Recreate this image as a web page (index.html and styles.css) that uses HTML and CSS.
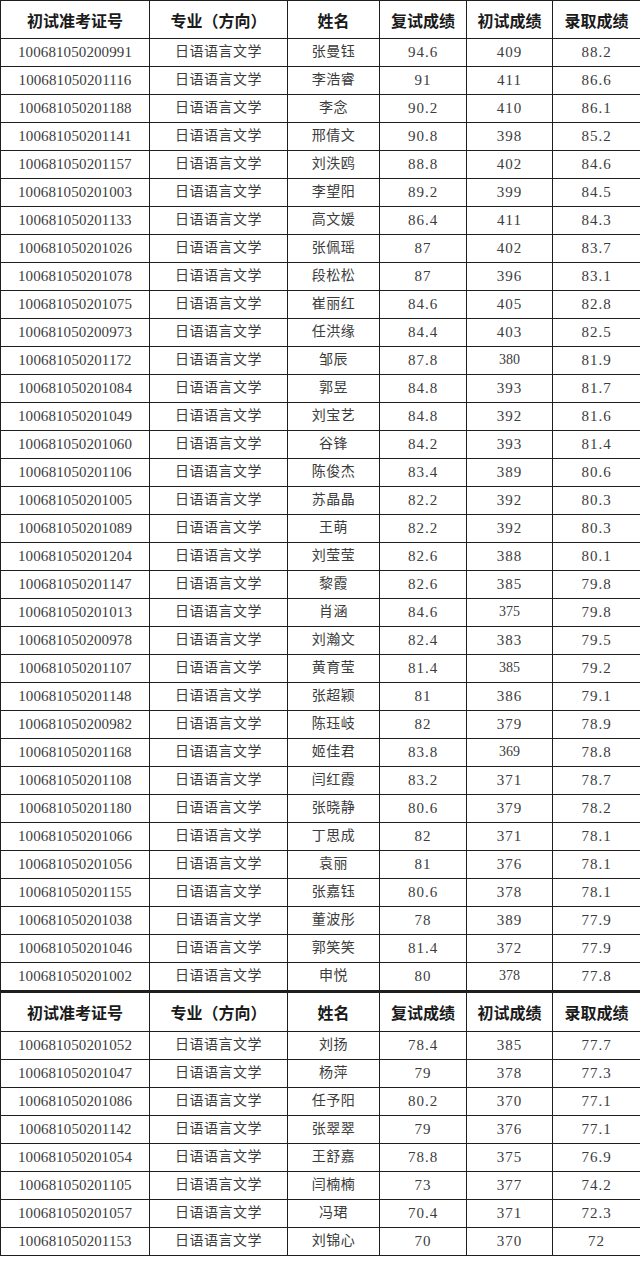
FILE: index.html
```html
<!DOCTYPE html>
<html lang="zh">
<head>
<meta charset="utf-8">
<link rel="stylesheet" href="styles.css">
</head>
<body>
<table class="grid">
<colgroup><col class="c1"><col class="c2"><col class="c3"><col class="c4"><col class="c5"><col class="c6"></colgroup>
<thead>
<tr class="head"><th>初试准考证号</th><th>专业（方向）</th><th>姓名</th><th>复试成绩</th><th>初试成绩</th><th>录取成绩</th></tr>
</thead>
<tbody>
<tr><td class="id">100681050200991</td><td>日语语言文学</td><td>张曼钰</td><td class="n">94.6</td><td class="n">409</td><td class="n">88.2</td></tr>
<tr><td class="id">100681050201116</td><td>日语语言文学</td><td>李浩睿</td><td class="n">91</td><td class="n">411</td><td class="n">86.6</td></tr>
<tr><td class="id">100681050201188</td><td>日语语言文学</td><td>李念</td><td class="n">90.2</td><td class="n">410</td><td class="n">86.1</td></tr>
<tr><td class="id">100681050201141</td><td>日语语言文学</td><td>邢倩文</td><td class="n">90.8</td><td class="n">398</td><td class="n">85.2</td></tr>
<tr><td class="id">100681050201157</td><td>日语语言文学</td><td>刘泆鸥</td><td class="n">88.8</td><td class="n">402</td><td class="n">84.6</td></tr>
<tr><td class="id">100681050201003</td><td>日语语言文学</td><td>李望阳</td><td class="n">89.2</td><td class="n">399</td><td class="n">84.5</td></tr>
<tr><td class="id">100681050201133</td><td>日语语言文学</td><td>高文媛</td><td class="n">86.4</td><td class="n">411</td><td class="n">84.3</td></tr>
<tr><td class="id">100681050201026</td><td>日语语言文学</td><td>张佩瑶</td><td class="n">87</td><td class="n">402</td><td class="n">83.7</td></tr>
<tr><td class="id">100681050201078</td><td>日语语言文学</td><td>段松松</td><td class="n">87</td><td class="n">396</td><td class="n">83.1</td></tr>
<tr><td class="id">100681050201075</td><td>日语语言文学</td><td>崔丽红</td><td class="n">84.6</td><td class="n">405</td><td class="n">82.8</td></tr>
<tr><td class="id">100681050200973</td><td>日语语言文学</td><td>任洪缘</td><td class="n">84.4</td><td class="n">403</td><td class="n">82.5</td></tr>
<tr><td class="id">100681050201172</td><td>日语语言文学</td><td>邹辰</td><td class="n">87.8</td><td class="n sm">380</td><td class="n">81.9</td></tr>
<tr><td class="id">100681050201084</td><td>日语语言文学</td><td>郭昱</td><td class="n">84.8</td><td class="n">393</td><td class="n">81.7</td></tr>
<tr><td class="id">100681050201049</td><td>日语语言文学</td><td>刘宝艺</td><td class="n">84.8</td><td class="n">392</td><td class="n">81.6</td></tr>
<tr><td class="id">100681050201060</td><td>日语语言文学</td><td>谷锋</td><td class="n">84.2</td><td class="n">393</td><td class="n">81.4</td></tr>
<tr><td class="id">100681050201106</td><td>日语语言文学</td><td>陈俊杰</td><td class="n">83.4</td><td class="n">389</td><td class="n">80.6</td></tr>
<tr><td class="id">100681050201005</td><td>日语语言文学</td><td>苏晶晶</td><td class="n">82.2</td><td class="n">392</td><td class="n">80.3</td></tr>
<tr><td class="id">100681050201089</td><td>日语语言文学</td><td>王萌</td><td class="n">82.2</td><td class="n">392</td><td class="n">80.3</td></tr>
<tr><td class="id">100681050201204</td><td>日语语言文学</td><td>刘莹莹</td><td class="n">82.6</td><td class="n">388</td><td class="n">80.1</td></tr>
<tr><td class="id">100681050201147</td><td>日语语言文学</td><td>黎霞</td><td class="n">82.6</td><td class="n">385</td><td class="n">79.8</td></tr>
<tr><td class="id">100681050201013</td><td>日语语言文学</td><td>肖涵</td><td class="n">84.6</td><td class="n sm">375</td><td class="n">79.8</td></tr>
<tr><td class="id">100681050200978</td><td>日语语言文学</td><td>刘瀚文</td><td class="n">82.4</td><td class="n">383</td><td class="n">79.5</td></tr>
<tr><td class="id">100681050201107</td><td>日语语言文学</td><td>黄育莹</td><td class="n">81.4</td><td class="n sm">385</td><td class="n">79.2</td></tr>
<tr><td class="id">100681050201148</td><td>日语语言文学</td><td>张超颖</td><td class="n">81</td><td class="n">386</td><td class="n">79.1</td></tr>
<tr><td class="id">100681050200982</td><td>日语语言文学</td><td>陈珏岐</td><td class="n">82</td><td class="n">379</td><td class="n">78.9</td></tr>
<tr><td class="id">100681050201168</td><td>日语语言文学</td><td>姬佳君</td><td class="n">83.8</td><td class="n sm">369</td><td class="n">78.8</td></tr>
<tr><td class="id">100681050201108</td><td>日语语言文学</td><td>闫红霞</td><td class="n">83.2</td><td class="n">371</td><td class="n">78.7</td></tr>
<tr><td class="id">100681050201180</td><td>日语语言文学</td><td>张晓静</td><td class="n">80.6</td><td class="n">379</td><td class="n">78.2</td></tr>
<tr><td class="id">100681050201066</td><td>日语语言文学</td><td>丁思成</td><td class="n">82</td><td class="n">371</td><td class="n">78.1</td></tr>
<tr><td class="id">100681050201056</td><td>日语语言文学</td><td>袁丽</td><td class="n">81</td><td class="n">376</td><td class="n">78.1</td></tr>
<tr><td class="id">100681050201155</td><td>日语语言文学</td><td>张嘉钰</td><td class="n">80.6</td><td class="n">378</td><td class="n">78.1</td></tr>
<tr><td class="id">100681050201038</td><td>日语语言文学</td><td>董波彤</td><td class="n">78</td><td class="n">389</td><td class="n">77.9</td></tr>
<tr><td class="id">100681050201046</td><td>日语语言文学</td><td>郭笑笑</td><td class="n">81.4</td><td class="n">372</td><td class="n">77.9</td></tr>
<tr><td class="id">100681050201002</td><td>日语语言文学</td><td>申悦</td><td class="n">80</td><td class="n sm">378</td><td class="n">77.8</td></tr>
</tbody>
</table>
<table class="grid second">
<colgroup><col class="c1"><col class="c2"><col class="c3"><col class="c4"><col class="c5"><col class="c6"></colgroup>
<thead>
<tr class="head head2"><th>初试准考证号</th><th>专业（方向）</th><th>姓名</th><th>复试成绩</th><th>初试成绩</th><th>录取成绩</th></tr>
</thead>
<tbody>
<tr><td class="id">100681050201052</td><td>日语语言文学</td><td>刘扬</td><td class="n">78.4</td><td class="n">385</td><td class="n">77.7</td></tr>
<tr><td class="id">100681050201047</td><td>日语语言文学</td><td>杨萍</td><td class="n">79</td><td class="n">378</td><td class="n">77.3</td></tr>
<tr><td class="id">100681050201086</td><td>日语语言文学</td><td>任予阳</td><td class="n">80.2</td><td class="n">370</td><td class="n">77.1</td></tr>
<tr><td class="id">100681050201142</td><td>日语语言文学</td><td>张翠翠</td><td class="n">79</td><td class="n">376</td><td class="n">77.1</td></tr>
<tr><td class="id">100681050201054</td><td>日语语言文学</td><td>王舒嘉</td><td class="n">78.8</td><td class="n">375</td><td class="n">76.9</td></tr>
<tr><td class="id">100681050201105</td><td>日语语言文学</td><td>闫楠楠</td><td class="n">73</td><td class="n">377</td><td class="n">74.2</td></tr>
<tr><td class="id">100681050201057</td><td>日语语言文学</td><td>冯珺</td><td class="n">70.4</td><td class="n">371</td><td class="n">72.3</td></tr>
<tr><td class="id">100681050201153</td><td>日语语言文学</td><td>刘锦心</td><td class="n">70</td><td class="n">370</td><td class="n">72</td></tr>
</tbody>
</table>
</body>
</html>
```

FILE: styles.css
```css
html, body {
  margin: 0;
  padding: 0;
  background: #ffffff;
}

.grid {
  border-collapse: collapse;
  table-layout: fixed;
  width: 640px;
  margin: 0;
}

.c1 { width: 149px; }
.c2 { width: 138px; }
.c3 { width: 92px; }
.c4 { width: 87px; }
.c5 { width: 86px; }
.c6 { width: 88px; }

.grid th,
.grid td {
  border: 1px solid #1e1e1e;
  padding: 0;
  text-align: center;
  vertical-align: middle;
  white-space: nowrap;
  overflow: hidden;
}

.grid th {
  height: 37px;
  line-height: 20px;
  font-family: "Noto Sans CJK SC", sans-serif;
  font-weight: 700;
  font-size: 16px;
  color: #1a1a1a;
}

.head2 th {
  height: 38px;
}

.second {
  border-top: 2px solid #1e1e1e;
}

.grid td {
  height: 26px;
  line-height: 18px;
  padding-bottom: 1px;
  font-family: "Liberation Serif", "Noto Sans CJK SC", serif;
  font-size: 14px;
  color: #3c3c3c;
  letter-spacing: 0.5px;
}

.grid td.id {
  font-size: 15px;
  letter-spacing: 0.1px;
}

.grid td.n {
  font-size: 15px;
  letter-spacing: 1px;
}

.grid td.n.sm {
  font-size: 14px;
  letter-spacing: 0;
}
```
